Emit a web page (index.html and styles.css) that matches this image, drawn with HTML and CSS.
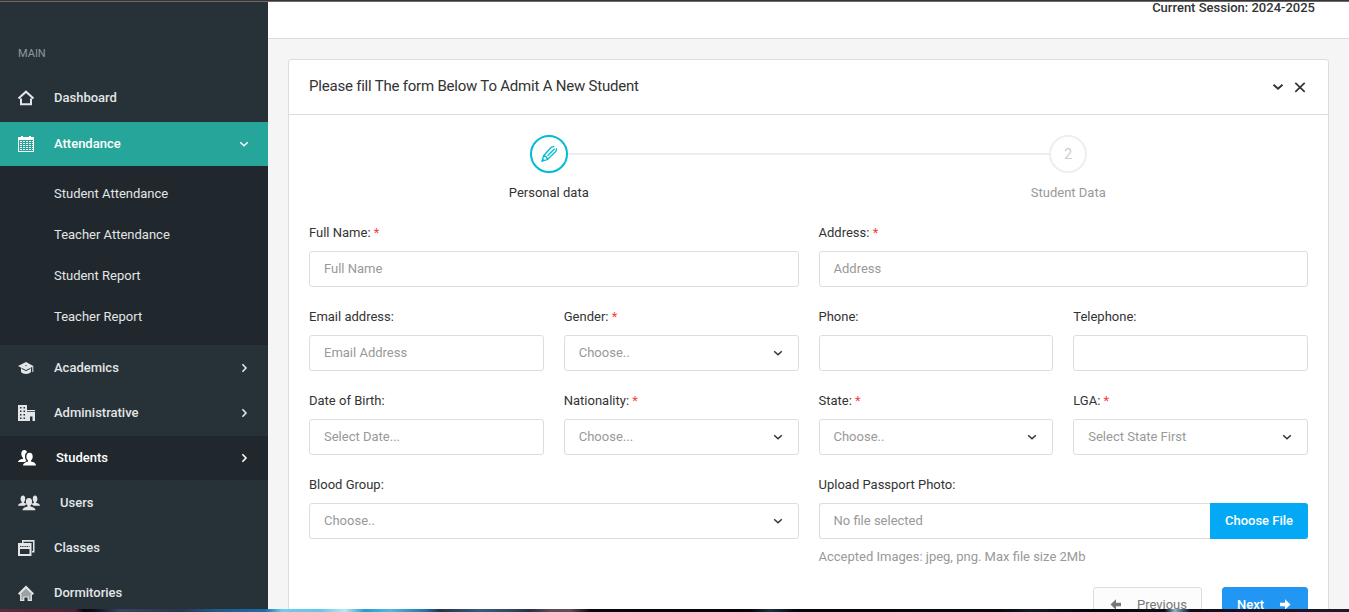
FILE: index.html
```html
<!DOCTYPE html>
<html lang="en">
<head>
<meta charset="utf-8">
<title>Admit Student</title>
<link rel="stylesheet" href="styles.css">
</head>
<body>
<svg class="sprite" aria-hidden="true">
  <symbol id="chev-down" viewBox="0 0 16 16"><path d="M4.200 6.200 8 9.800l3.800-3.600" fill="none" stroke="currentColor" stroke-width="1.500"/></symbol>
  <symbol id="chev-right" viewBox="0 0 16 16"><path d="M6.400 4.200 10 8l-3.600 3.800" fill="none" stroke="currentColor" stroke-width="1.600"/></symbol>
</svg>
<div class="edge-top"></div>
<div class="page">
  <nav class="sidebar">
    <div class="nav-header">MAIN</div>
    <a class="nav-item first"><svg class="icon" viewBox="0 0 16 16"><path d="M.5 8.600 8 1.700l7.500 6.900M3 8.500v5.700h10V8.500" fill="none" stroke="currentColor" stroke-width="2"/></svg><span>Dashboard</span></a>
    <a class="nav-item active"><svg class="icon" viewBox="0 0 16 16"><path fill="currentColor" fill-rule="evenodd" d="M0 1h3V0h2v1h6V0h2v1h3v15H0zM1 4v11h14V4z"/><path stroke="currentColor" stroke-width="1" stroke-dasharray="2 1" d="M2 5.500h13M2 7.500h13M2 9.500h13M2 11.500h13M2 13.500h13"/></svg><span>Attendance</span><svg class="arrow"><use href="#chev-down"/></svg></a>
    <div class="submenu">
      <a>Student Attendance</a>
      <a>Teacher Attendance</a>
      <a>Student Report</a>
      <a>Teacher Report</a>
    </div>
    <a class="nav-item"><svg class="icon" viewBox="0 0 16 16"><path fill="currentColor" d="M8 2 0 6l3 1.500V12c1 1.300 3 2 5 2s4-.7 5-2V7.500l1.300-.7V12h1V6.100z"/><path d="M3.500 8.300 8 10.600l4.500-2.300" fill="none" stroke="#263238" stroke-width="1"/><circle cx="8" cy="5.600" r=".7" fill="#263238"/></svg><span>Academics</span><svg class="arrow"><use href="#chev-right"/></svg></a>
    <a class="nav-item"><svg class="icon" viewBox="0 0 16 16"><path fill="currentColor" fill-rule="evenodd" d="M0 0h9v16H0zM2 2v1.500h1.500V2zm3.500 0v1.500H7V2zM2 5.500V7h1.500V5.500zm3.500 0V7H7V5.500zM2 9v1.500h1.500V9zm3.500 0v1.500H7V9zM2 12.500V14h1.500v-1.500zm3.500 0V14H7v-1.500zM9 5h8v1.300H9zM9 7h8v9h-2.500v-4.500H12V16H9z"/></svg><span>Administrative</span><svg class="arrow"><use href="#chev-right"/></svg></a>
    <a class="nav-item selected"><svg class="icon w18" viewBox="0 0 18 16"><path fill="currentColor" d="M6.500 12.100c.5-.4 1.300-.8 2-1C7.500 9.900 7 8.300 7 6.600c0-2 .4-3.600 2-4.400C8.600.7 7.700 0 6.400 0 4 0 3.300 1.700 3.300 4c0 1.500.7 3 1.700 3.700v1C2.400 9.100 0 10.400 0 12h6.400z"/><path fill="currentColor" d="M13 11.400v-1c1-.7 1.700-2.200 1.700-3.700 0-2.300-.7-4-3.100-4s-3.200 1.700-3.200 4c0 1.500.7 3 1.700 3.700v1C7.400 11.900 5 13.300 5 15.500h13c0-2.200-2.200-3.700-5-4.100z"/></svg><span>Students</span><svg class="arrow"><use href="#chev-right"/></svg></a>
    <a class="nav-item"><svg class="icon w22" viewBox="0 0 22 16"><g fill="currentColor"><path d="M6 7.700V7c.8-.6 1.200-1.600 1.200-3C7.200 1.700 6.600.5 5 .5S2.600 1.700 2.600 4c0 1.400.5 2.400 1.300 3v.8C1.800 8.200 0 9.200 0 10.800h6.500c.4-.5 1-1 1.800-1.300C8 8.500 7 7.900 6 7.700z"/><path d="M16 7.700V7c-.8-.6-1.200-1.600-1.200-3 0-2.300.6-3.500 2.200-3.500s2.400 1.200 2.400 3.500c0 1.400-.5 2.400-1.300 3v.8c2.100.4 3.900 1.400 3.900 3h-6.500c-.4-.5-1-1-1.800-1.300.3-1 1.300-1.600 2.300-1.800z"/><path d="M12.400 11.500v-1c1-.7 1.700-2 1.700-3.600 0-2.300-.8-3.900-3.100-3.900S7.900 4.600 7.900 6.900c0 1.600.7 2.900 1.700 3.600v1c-2.800.4-5.100 1.600-5.100 3.800h13c0-2.200-2.300-3.400-5.100-3.800z"/></g></svg><span>Users</span></a>
    <a class="nav-item"><svg class="icon" viewBox="0 0 16 16"><path fill="currentColor" fill-rule="evenodd" d="M4 0h12.500v12.500H14V11h1V1.700H5.500V3H4zM0 3h13.500v13H0zM2 9v5h9.500V9z"/><path d="M2 6.500h9.500" stroke="#263238" stroke-dasharray="1.400 .8"/></svg><span>Classes</span></a>
    <a class="nav-item"><svg class="icon" viewBox="0 0 16 16"><path fill="#9da1a4" d="M8 2 2 8v8h4v-4h4v4h4V8z"/><path d="M.7 9.300 8 2l7.300 7.300" fill="none" stroke="currentColor" stroke-width="2"/><path d="M2.800 9v6.300h3V12h4.400v3.300h3V9" fill="none" stroke="currentColor" stroke-width="1.200"/></svg><span>Dormitories</span></a>
  </nav>
  <main class="content">
    <header class="page-header"><span>Current Session: 2024-2025</span></header>
    <section class="card">
      <div class="card-header">
        <h6>Please fill The form Below To Admit A New Student</h6>
        <div class="tools">
          <svg viewBox="0 0 16 16"><path d="M3.500 5.700 8 9.700l4.500-4" fill="none" stroke="#333" stroke-width="1.900"/></svg>
          <svg viewBox="0 0 16 16"><path d="m3.300 3.800 9.400 9m0-9-9.400 9" fill="none" stroke="#333" stroke-width="1.700"/></svg>
        </div>
      </div>
      <div class="card-body">
        <div class="steps">
          <div class="step current"><div class="bullet"><svg viewBox="0 0 16 16"><path d="M1 15.200 2.600 9.700 9.600 2C10.800.8 12 .3 13.200.8M1 15.200l5.600-1.700 7.800-7.800c1.100-1.200 1.400-2.300.8-3.500M2.600 9.700c1.800.3 3.500 2 4 3.800M6.600 9.800l7-7" fill="none" stroke="currentColor" stroke-width="1.300"/><path fill="currentColor" d="M.2 15.900 1.500 12l2.300 2.700z"/></svg></div><span>Personal data</span></div>
          <div class="step"><div class="bullet">2</div><span>Student Data</span></div>
        </div>
        <form class="form">
          <div class="field wide"><label>Full Name: <b>*</b></label><input class="control" placeholder="Full Name"></div>
          <div class="field wide"><label>Address: <b>*</b></label><input class="control" placeholder="Address"></div>
          <div class="field"><label>Email address:</label><input class="control" placeholder="Email Address"></div>
          <div class="field"><label>Gender: <b>*</b></label><div class="control select"><span>Choose..</span><svg><use href="#chev-down"/></svg></div></div>
          <div class="field"><label>Phone:</label><input class="control"></div>
          <div class="field"><label>Telephone:</label><input class="control"></div>
          <div class="field"><label>Date of Birth:</label><input class="control" placeholder="Select Date..."></div>
          <div class="field"><label>Nationality: <b>*</b></label><div class="control select"><span>Choose...</span><svg><use href="#chev-down"/></svg></div></div>
          <div class="field"><label>State: <b>*</b></label><div class="control select"><span>Choose..</span><svg><use href="#chev-down"/></svg></div></div>
          <div class="field"><label>LGA: <b>*</b></label><div class="control select"><span>Select State First</span><svg><use href="#chev-down"/></svg></div></div>
          <div class="field wide"><label>Blood Group:</label><div class="control select"><span>Choose..</span><svg><use href="#chev-down"/></svg></div></div>
          <div class="field wide"><label>Upload Passport Photo:</label>
            <div class="upload"><div class="control select">No file selected</div><div class="choose">Choose File</div></div>
            <div class="help">Accepted Images: jpeg, png. Max file size 2Mb</div>
          </div>
        </form>
        <div class="actions">
          <div class="btn previous"><svg viewBox="0 0 16 16"><path fill="currentColor" d="M2.500 7.500 8 2.200v3.500h5v3.600H8v3.500z"/></svg><span>Previous</span></div>
          <div class="btn next"><span>Next</span><svg viewBox="0 0 16 16"><path fill="currentColor" d="M13.500 7.500 8 2.200v3.500H3v3.600h5v3.500z"/></svg></div>
        </div>
      </div>
    </section>
  </main>
</div>
<div class="edge-bottom"></div>
</body>
</html>
```
FILE: styles.css
```css
* { box-sizing: border-box; }

body {
  margin: 0;
  height: 612px;
  overflow: hidden;
  display: flex;
  flex-direction: column;
  background: #f5f5f5;
  color: #333;
  font: 400 13px/20px Roboto, sans-serif;
}

.sprite { display: none; }

.edge-top {
  flex: none;
  height: 2px;
  background: linear-gradient(#393536 50%, #6d696a 50%);
}

.edge-bottom {
  flex: none;
  height: 3px;
  background: linear-gradient(90deg, #5b2a3d 0, #4b2036 75px, #08070d 84px, #0d1020 95px, #34465e 120px, #27364d 180px, #205a87 215px, #1d6ba8 265px, #72cce8 282px, #67c5e9 320px, #b9e8f2 345px, #249bd2 365px, #58b8df 390px, #2374a4 425px, #26334c 440px, #365a7e 480px, #304764 510px, #283047 530px, #5b4b59 550px, #604d5e 570px, #080710 590px, #03030a 750px, #183047 770px, #04060e 795px, #06070f 1000px, #101b29 1030px, #03040c 1090px, #090c16 1165px, #8fb8ce 1175px, #466781 1182px, #100d1b 1190px, #1e1829 1349px);
}

.page { flex: 1; min-height: 0; display: flex; overflow: hidden; }

.sidebar {
  flex: none;
  width: 268px;
  background: #263238;
  color: #e3e5e6;
}

.nav-header {
  padding: 42px 18px 12px;
  color: #929698;
  font-size: 11px;
}

.nav-item {
  display: flex;
  align-items: center;
  height: 44px;
  margin-bottom: 1px;
  padding: 0 16px 0 18px;
  font-weight: 500;
}

.nav-item.first { margin-bottom: 2px; }
.nav-item.active { margin: 0; background: #26a69a; color: #fff; }
.nav-item.selected { background: #20282d; color: #fff; }

.icon { width: 16px; height: 16px; margin-right: 20px; overflow: visible; }
.icon.w18 { width: 18px; }
.icon.w22 { width: 22px; }
.arrow { width: 16px; height: 16px; margin-left: auto; }

.submenu {
  margin-bottom: 1px;
  padding: 8px 0 7px;
  background: #20282d;
}

.submenu a { display: block; height: 41px; padding: 10px 54px; }

.content { flex: 1; min-width: 0; }

.page-header {
  display: flex;
  justify-content: flex-end;
  height: 37px;
  padding-right: 34px;
  border-bottom: 1px solid #ddd;
  background: #fff;
  font-weight: 500;
}

.page-header span { height: 20px; margin-top: -4px; }

.card {
  margin: 20px 20px 0;
  border: 1px solid #ddd;
  border-radius: 3px 3px 0 0;
  background: #fff;
}

.card-header {
  display: flex;
  align-items: center;
  justify-content: space-between;
  height: 55px;
  padding: 0 20px;
  border-bottom: 1px solid #ddd;
}

.card-header h6 {
  margin: 0 0 2px;
  font-size: 15px;
  font-weight: 400;
  line-height: 23px;
  letter-spacing: -0.21px;
}

.tools { display: flex; gap: 6px; }
.tools svg { width: 16px; height: 16px; }

.card-body { height: 560px; padding: 20px; }

.steps { display: flex; margin: 0 -20px 20px; }

.step {
  position: relative;
  flex: 1;
  display: flex;
  flex-direction: column;
  align-items: center;
  gap: 10px;
  color: #999;
}

.step::before {
  content: "";
  position: absolute;
  top: 18px;
  left: 0;
  width: 50%;
  height: 2px;
  background: #eee;
}

.step.current { color: #333; }
.step.current::before { left: 50%; }

.bullet {
  z-index: 1;
  display: flex;
  align-items: center;
  justify-content: center;
  width: 38px;
  height: 38px;
  border: 2px solid #eee;
  border-radius: 50%;
  background: #fff;
  color: #ccc;
  font-size: 14px;
}

.current .bullet { border-color: #00bcd4; color: #00bcd4; }
.bullet svg { width: 16px; height: 16px; }

.form {
  display: grid;
  grid-template-columns: repeat(4, 1fr);
  gap: 20px;
}

.field { min-width: 0; }
.field.wide { grid-column: span 2; }
.field label { display: block; margin-bottom: 8px; }
.field b { color: #f44336; font-weight: 400; }

.control {
  display: block;
  width: 100%;
  height: 36px;
  padding: 0 14px 2px;
  border: 1px solid #ddd;
  border-radius: 3px;
  background: #fff;
  color: #999;
  font: inherit;
}

.control::placeholder { color: #999; opacity: 1; }
.select { display: flex; align-items: center; justify-content: space-between; padding: 0 12px 0 14px; }
.select svg { width: 16px; height: 16px; color: #333; }

.upload { display: flex; }
.upload .control { border-right: 0; border-radius: 3px 0 0 3px; }

.choose {
  flex: none;
  width: 98px;
  border-radius: 0 3px 3px 0;
  background: #03a9f4;
  color: #fff;
  line-height: 36px;
  text-align: center;
  font-weight: 500;
}

.help { margin-top: 8px; color: #999; }

.actions { display: flex; justify-content: flex-end; gap: 20px; margin-top: 20px; }

.btn {
  display: flex;
  align-items: center;
  justify-content: space-between;
  height: 36px;
  padding: 0 14px;
  border: 1px solid #ddd;
  border-radius: 3px;
}

.previous { width: 109px; background: #fcfcfc; color: #777; }
.next { width: 86px; border-color: #2196f3; background: #2196f3; color: #fff; font-weight: 500; }
.btn svg { width: 16px; height: 16px; }
```
